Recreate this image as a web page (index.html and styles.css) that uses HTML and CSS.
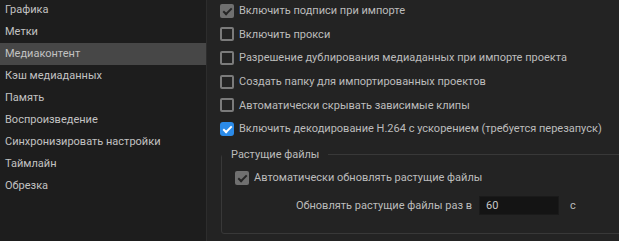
FILE: index.html
```html
<!DOCTYPE html>
<html>
<head>
    <meta charset="UTF-8">
    <title>Настройки</title>
    <link rel="stylesheet" href="styles.css">
</head>
<body>
    <div class="prefs">
        <ul class="prefs-nav">
            <li>Графика</li>
            <li>Метки</li>
            <li class="active">Медиаконтент</li>
            <li>Кэш медиаданных</li>
            <li>Память</li>
            <li>Воспроизведение</li>
            <li>Синхронизировать настройки</li>
            <li>Таймлайн</li>
            <li>Обрезка</li>
        </ul>
        <div class="prefs-panel">
            <ul class="option-list">
                <li class="option"><span class="check check-disabled"></span>Включить подписи при импорте</li>
                <li class="option"><span class="check"></span>Включить прокси</li>
                <li class="option"><span class="check"></span>Разрешение дублирования медиаданных при импорте проекта</li>
                <li class="option"><span class="check"></span>Создать папку для импортированных проектов</li>
                <li class="option"><span class="check"></span>Автоматически скрывать зависимые клипы</li>
                <li class="option"><span class="check check-on"></span>Включить декодирование H.264 с ускорением (требуется перезапуск)</li>
            </ul>
            <fieldset class="group">
                <legend>Растущие файлы</legend>
                <div class="option"><span class="check check-disabled"></span>Автоматически обновлять растущие файлы</div>
                <div class="field-row">
                    <label for="growInterval">Обновлять растущие файлы раз в</label>
                    <input id="growInterval" class="num-input" type="text" value="60">
                    <span class="unit">с</span>
                </div>
            </fieldset>
        </div>
    </div>
</body>
</html>
```

FILE: styles.css
```css
body {
    margin: 0;
    background-color: #232323;
    font-family: Roboto, "Noto Sans", sans-serif;
    font-size: 11px;
    color: #bcbcbc;
    overflow: hidden;
}

.prefs {
    display: flex;
    height: 241px;
}

.prefs-nav {
    list-style: none;
    margin: -1px 0 0 0;
    padding: 0;
    width: 206px;
    flex-shrink: 0;
    background-color: #1d1d1d;
    border-right: 1px solid #2d2d2d;
}
.prefs-nav li {
    height: 22px;
    line-height: 22px;
    padding-left: 5px;
    color: #c2c2c2;
    white-space: nowrap;
}
.prefs-nav li.active {
    background-color: #474747;
}

.prefs-panel {
    flex: 1;
    min-width: 0;
    padding-left: 13px;
    overflow: hidden;
}

.option-list {
    list-style: none;
    margin: -1px 0 0 0;
    padding: 0;
}
.option {
    display: flex;
    align-items: center;
    height: 23.6px;
    white-space: nowrap;
}

.check {
    box-sizing: border-box;
    width: 14px;
    height: 14px;
    margin-right: 5px;
    border: 2px solid #7b7b7b;
    border-radius: 2px;
    flex-shrink: 0;
    position: relative;
}
.check-disabled,
.check-on {
    border: none;
    background-color: #707070;
}
.check-on {
    background-color: #2b8be9;
    border-radius: 3px;
}
.check-disabled::after,
.check-on::after {
    content: "";
    position: absolute;
    left: 5px;
    top: 2px;
    width: 3px;
    height: 7px;
    border: solid #262626;
    border-width: 0 2px 2px 0;
    transform: rotate(45deg);
}
.check-on::after {
    border-color: #ffffff;
}

.group {
    width: 420px;
    margin: 6px 0 0 1px;
    padding: 0 0 12px 0;
    border: 1px solid #383838;
    border-radius: 3px;
}
.group legend {
    padding: 0 9px;
    line-height: 16px;
    color: #bcbcbc;
}
.group .option {
    padding-left: 13px;
    height: 24px;
    margin-top: 3px;
}

.field-row {
    display: flex;
    align-items: center;
    height: 31px;
    white-space: nowrap;
}
.field-row label {
    width: 250px;
    flex-shrink: 0;
    text-align: right;
    margin-right: 7px;
}
.num-input {
    box-sizing: border-box;
    width: 80px;
    height: 19px;
    padding: 0 6px;
    background-color: #141414;
    border: 1px solid #1a1a1a;
    color: #c8c8c8;
    font-family: inherit;
    font-size: 11px;
    outline: none;
}
.unit {
    margin-left: 11px;
}
```
